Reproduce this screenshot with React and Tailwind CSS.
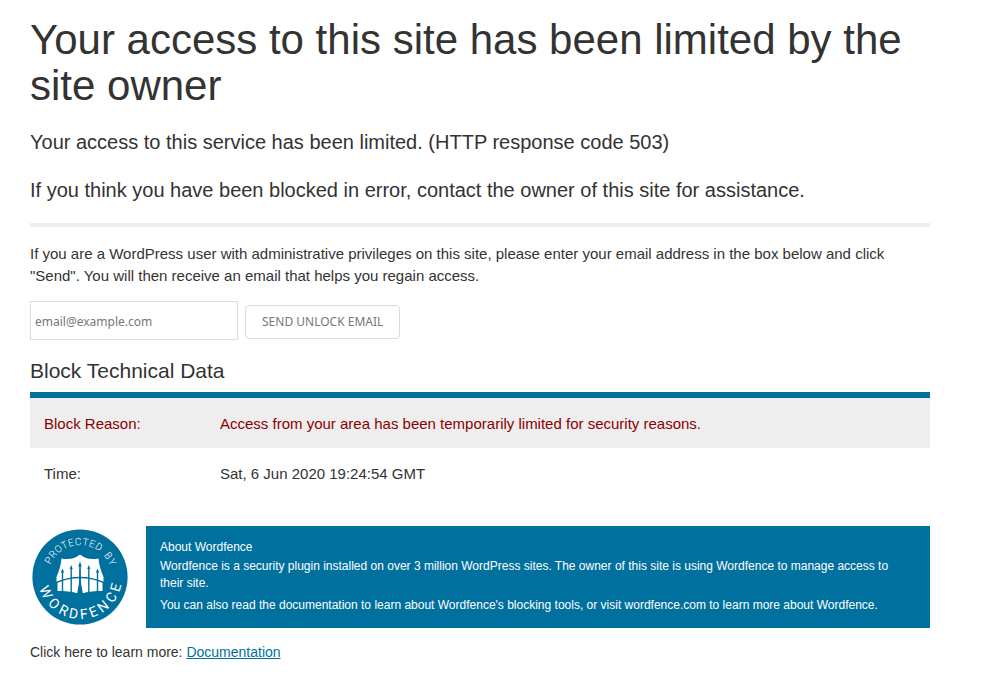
const TOP_LETTERS = [
  ["P", -62], ["R", -50], ["O", -38], ["T", -26], ["E", -15], ["C", -3],
  ["T", 9], ["E", 20], ["D", 32], ["B", 53], ["Y", 65],
];

const BOTTOM_LETTERS = [
  ["W", 66], ["O", 44], ["R", 26], ["D", 10], ["F", -6], ["E", -21],
  ["N", -38], ["C", -57], ["E", -74],
];

function WordfenceBadge() {
  return (
    <svg
      role="img"
      aria-label="Protected by Wordfence"
      viewBox="-48 -48 96 96"
      className="h-24 w-24 shrink-0 font-['Roboto',sans-serif]"
    >
      <circle r="47.6" fill="#00709e" />
      <path
        d="M0 -22.5C-5 -18.5 -11 -17 -18.5 -18.5C-19 -12 -21 -6 -23.5 0V6H-22.5V14C-16 14 -8 14.5 -1.5 16.5H1.5C8 14.5 16 14 22.5 14V6H23.5V0C21 -6 19 -12 18.5 -18.5C11 -17 5 -18.5 0 -22.5Z"
        fill="#fff"
      />
      <path
        d="M-17.5 -5V15M-8.8 -9V16M8.8 -9V16M17.5 -5V15"
        stroke="#00709e"
        strokeWidth="1.4"
      />
      <path d="M-0.8 -12H0.8L1 6L3 17H-3L-1 6Z" fill="#00709e" />
      <path
        d="M-17.5 -8.5L-15.9 -4.5H-19.1ZM-8.8 -12L-7.2 -8H-10.4ZM0 -15.5L1.8 -10.5H-1.8ZM8.8 -12L10.4 -8H7.2ZM17.5 -8.5L19.1 -4.5H15.9Z"
        fill="#00709e"
      />
      <path d="M-25 6Q0 -5 25 6" fill="none" stroke="#00709e" strokeWidth="1.6" />
      <g fill="#fff" fontSize="10" fontWeight="300" textAnchor="middle">
        {TOP_LETTERS.map(([letter, angle]) => (
          <text key={angle} y="-32" transform={`rotate(${angle})`}>{letter}</text>
        ))}
      </g>
      <g fill="#fff" fontSize="14" textAnchor="middle">
        {BOTTOM_LETTERS.map(([letter, angle]) => (
          <text key={angle} y="42" transform={`rotate(${angle})`}>{letter}</text>
        ))}
      </g>
    </svg>
  );
}

export default function App() {
  return (
    <main className="max-w-[960px] px-[30px] pt-[17px] pb-4 font-['Liberation_Sans',Arial,sans-serif] text-[15px] leading-[22px] text-[#333]">
      <h1 className="text-[42px] leading-[46px]">
        Your access to this site has been limited by the site owner
      </h1>
      <p className="mt-[19px] text-[20px] leading-[28px]">
        Your access to this service has been limited. (HTTP response code 503)
      </p>
      <p className="mt-5 text-[20px] leading-[28px]">
        If you think you have been blocked in error, contact the owner of this site for assistance.
      </p>
      <hr className="mt-[19px] border-t-4 border-[#eee]" />
      <p className="mt-4">
        If you are a WordPress user with administrative privileges on this site, please enter your email address in the box below and click "Send". You will then receive an email that helps you regain access.
      </p>
      <form className="mt-[14px] flex items-end gap-[7px] font-['Noto_Sans',sans-serif] text-[12px]" onSubmit={(e) => e.preventDefault()}>
        <input
          type="email"
          aria-label="Email address"
          placeholder="email@example.com"
          className="h-[39px] w-[208px] border border-[#ddd] px-1 pt-0.5 placeholder:text-[#777]"
        />
        <button type="submit" className="mb-px h-[34px] rounded border border-[#ddd] px-4 text-[#777]">
          SEND UNLOCK EMAIL
        </button>
      </form>
      <h2 className="mt-[19px] text-[21px] leading-[23px]">Block Technical Data</h2>
      <table className="mt-[10px] w-full border-separate border-spacing-0 border-t-[6px] border-[#00709e] text-left">
        <tbody>
          <tr className="h-[50px] bg-[#eee] text-[#8b0000]">
            <th scope="row" className="w-[190px] pt-0.5 pl-[14px] font-normal">Block Reason:</th>
            <td className="pt-0.5">Access from your area has been temporarily limited for security reasons.</td>
          </tr>
          <tr className="h-[50px]">
            <th scope="row" className="pt-0.5 pl-[14px] font-normal">Time:</th>
            <td className="pt-0.5">Sat, 6 Jun 2020 19:24:54 GMT</td>
          </tr>
        </tbody>
      </table>
      <section className="mt-7 flex items-center gap-[18px] pl-0.5">
        <WordfenceBadge />
        <div className="flex-1 bg-[#00709e] pt-[13px] pr-5 pb-[14px] pl-[14px] text-[12px] leading-[17px] text-white">
          <h3>About Wordfence</h3>
          <p className="mt-0.5">
            Wordfence is a security plugin installed on over 3 million WordPress sites. The owner of this site is using Wordfence to manage access to their site.
          </p>
          <p className="mt-[5px]">
            You can also read the documentation to learn about Wordfence's blocking tools, or visit wordfence.com to learn more about Wordfence.
          </p>
        </div>
      </section>
      <p className="mt-[14px] text-[14px] leading-[20px]">
        Click here to learn more: <a href="#documentation" className="text-[#00709e] underline">Documentation</a>
      </p>
    </main>
  );
}
